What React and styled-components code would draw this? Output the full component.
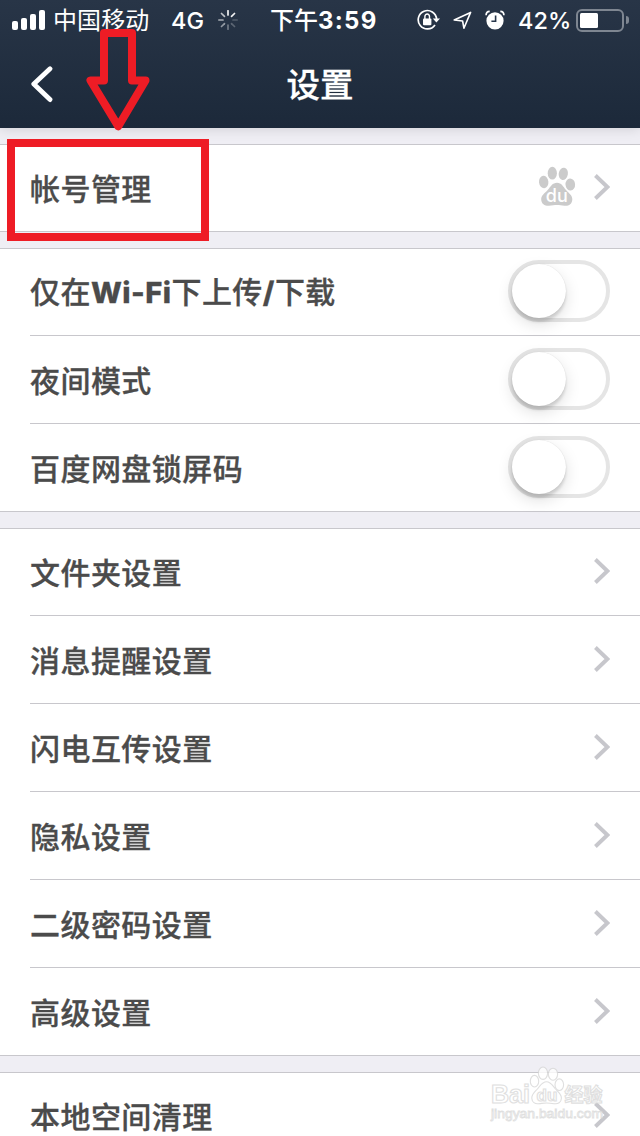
import styled, { createGlobalStyle } from "styled-components";

const groups = [
  [{ label: "帐号管理", type: "account" }],
  [
    { label: "仅在Wi-Fi下上传/下载", type: "switch" },
    { label: "夜间模式", type: "switch" },
    { label: "百度网盘锁屏码", type: "switch" },
  ],
  [
    { label: "文件夹设置" },
    { label: "消息提醒设置" },
    { label: "闪电互传设置" },
    { label: "隐私设置" },
    { label: "二级密码设置" },
    { label: "高级设置" },
  ],
  [{ label: "本地空间清理" }],
];

const spokes = [0.95, 0.95, 0.2, 0.25, 0.35, 0.5, 0.6, 0.7];

const GlobalStyle = createGlobalStyle`
  body {
    margin: 0;
    overflow: hidden;
  }
`;

const Page = styled.div`
  position: relative;
  width: 640px;
  height: 1136px;
  overflow: hidden;
  background: #efeef4;
  font-family: "Inter", "Noto Sans CJK SC", sans-serif;
  color: #4b4b4b;
  svg {
    display: block;
    flex: none;
  }
`;

const Header = styled.header`
  height: 128px;
  margin-bottom: 16px;
  background: linear-gradient(#283547, #1c293a);
  color: #fff;
  box-shadow: 0 1px 12px rgba(0, 0, 0, 0.13);
`;

const Status = styled.div`
  display: flex;
  align-items: center;
  height: 40px;
  padding-left: 12px;
  font-size: 24px;
  line-height: 38px;
  white-space: nowrap;
`;

const Signal = styled.div`
  display: flex;
  align-items: flex-end;
  gap: 3px;
  width: 41px;
  height: 20px;
`;

const SignalBar = styled.i`
  width: 6px;
  height: ${({ $height }) => $height}px;
  border-radius: 2px;
  background: #fff;
`;

const StatusText = styled.span`
  width: ${({ $width }) => $width}px;
  padding-top: 2px;
`;

const Carrier = styled(StatusText)`
  letter-spacing: 0.1px;
`;

const Digits = styled(StatusText)`
  font-size: 23.5px;
  font-weight: 500;
`;

const Spinner = styled.svg`
  margin-right: 32px;
`;

const Clock = styled(StatusText)`
  font-weight: 500;
  b {
    font-weight: 700;
    letter-spacing: 1.3px;
  }
`;

const StatusIcons = styled.div`
  display: flex;
  align-items: center;
  gap: 13px;
  width: 101px;
`;

const Battery = styled.div`
  box-sizing: border-box;
  width: 48px;
  height: 23px;
  padding: 2px;
  border: 2px solid #7e8691;
  border-radius: 6px;
`;

const BatteryLevel = styled.div`
  width: ${({ $level }) => $level}%;
  height: 15px;
  border-radius: 1.5px;
  background: #fff;
`;

const BatteryTip = styled.div`
  width: 3px;
  height: 8px;
  margin-left: 2px;
  border-radius: 0 4px 4px 0;
  background: #7e8691;
`;

const Nav = styled.nav`
  display: grid;
  grid-template-columns: 1fr auto 1fr;
  align-items: center;
  height: 88px;
`;

const Back = styled.div`
  padding-left: 29px;
`;

const Title = styled.h1`
  margin: 0;
  padding-top: 2px;
  font-size: 33.5px;
  font-weight: 500;
  line-height: 86px;
  -webkit-text-stroke: 0.3px #fff;
`;

const Group = styled.section`
  border-top: 1px solid #c8c7cc;
  border-bottom: 1px solid #c8c7cc;
  margin-bottom: 16px;
  background: #fff;
`;

const Row = styled.div`
  display: flex;
  align-items: center;
  box-sizing: border-box;
  height: 88px;
  margin-left: 30px;
  padding: 0 30px 1px 0;
  border-bottom: 1px solid #c8c7cc;
  &:first-child {
    height: 87px;
    padding-bottom: 2px;
  }
  /* the group closes with its own full width line */
  &:last-child {
    height: 87px;
    border-bottom: 0;
  }
  &:first-child:last-child {
    height: 86px;
  }
`;

const RowLabel = styled.span`
  flex: 1;
  padding-top: 3px;
  font-size: 30px;
  font-weight: 500;
  letter-spacing: 0.45px;
  line-height: 44px;
  white-space: nowrap;
  -webkit-text-stroke: 0.3px #4b4b4b;
`;

const Latin = styled.span`
  font-size: 29.2px;
  font-weight: 800;
`;

const PawIcon = styled.svg`
  margin-right: 17px;
`;

const PawText = styled.text`
  fill: #fff;
  font: 500 18px "Inter", sans-serif;
  text-anchor: middle;
`;

const Toggle = styled.div`
  box-sizing: border-box;
  width: 102px;
  height: 62px;
  border: 4px solid #e5e5e5;
  border-radius: 31px;
  &::before {
    content: "";
    display: block;
    width: 54px;
    height: 54px;
    border-radius: 50%;
    background: #fff;
    box-shadow: 0 6px 16px rgba(0, 0, 0, 0.13), 0 4px 3px rgba(0, 0, 0, 0.12),
      0 0 1px rgba(0, 0, 0, 0.15);
  }
`;

const WatermarkMark = styled.svg`
  position: absolute;
  left: 486px;
  top: 1064px;
  opacity: 0.8;
`;

const MarkText = styled.text`
  font: ${({ $font }) => $font} "Liberation Sans", "Noto Sans CJK SC", sans-serif;
`;

const Arrow = styled.svg`
  position: absolute;
  left: 85px;
  top: 26px;
`;

const Highlight = styled.div`
  position: absolute;
  left: 7px;
  top: 139px;
  box-sizing: border-box;
  width: 202px;
  height: 102px;
  border: 8px solid #ee1c25;
`;

// latin parts of a label are set in a heavier face than the chinese ones
function Label({ text }) {
  return (
    <RowLabel>
      {text.split(/([A-Za-z-]+|\/)/).map((part, i) =>
        i % 2 ? <Latin key={i}>{part}</Latin> : part
      )}
    </RowLabel>
  );
}

function Chevron() {
  return (
    <svg width="17" height="26" viewBox="0 0 17 26" fill="none">
      <path d="M2.4 1.5 L14.4 13 L2.4 24.5" stroke="#c7c7cc" strokeWidth="3.9" />
    </svg>
  );
}

function Paw() {
  return (
    <PawIcon width="38" height="42" viewBox="0 0 38 42">
      <g fill="#cbcbcb">
        <ellipse cx="5.7" cy="16" rx="4.7" ry="6.2" transform="rotate(-6 5.7 16)" />
        <ellipse cx="14.3" cy="7.2" rx="4.6" ry="6.4" />
        <ellipse cx="25.3" cy="7.8" rx="4.6" ry="6.2" transform="rotate(10 25.3 7.8)" />
        <ellipse cx="32.3" cy="18.5" rx="4.8" ry="6" transform="rotate(-4 32.3 18.5)" />
        <path d="M19 16.8 C23.5 16.8 25 20.5 28 24 C31 27.3 34.5 29.5 34.3 33.5 C34.1 38.2 30.5 40.3 26.5 39.8 C23.5 39.5 21.5 39 19 39 C16.5 39 14 39.6 11 39.8 C6.8 40 3.4 38 3.2 33.5 C3 29.5 6.8 27.2 9.7 24 C12.8 20.5 14.5 16.8 19 16.8 Z" />
      </g>
      <PawText x="18.8" y="36.2">
        du
      </PawText>
    </PawIcon>
  );
}

function StatusBar() {
  return (
    <Status>
      <Signal>
        {[9, 12, 16, 20].map((h) => (
          <SignalBar key={h} $height={h} />
        ))}
      </Signal>
      <Carrier $width={118}>中国移动</Carrier>
      <Digits $width={47}>4G</Digits>
      <Spinner width="20" height="20" viewBox="-10 -10 20 20">
        {spokes.map((o, i) => (
          <path
            key={i}
            d="M0 -5 V-9.2"
            stroke="#fff"
            strokeWidth="1.7"
            strokeLinecap="round"
            opacity={o}
            transform={`rotate(${i * 45})`}
          />
        ))}
      </Spinner>
      <Clock $width={147}>
        下午<b>3:59</b>
      </Clock>
      <StatusIcons>
        {/* rotation lock */}
        <svg width="23" height="22" viewBox="0 0 23 22" fill="none">
          <path d="M18 16 A9.2 9.2 0 1 1 19.6 10" stroke="#fff" strokeWidth="1.7" />
          <path d="M15.8 9.4 H23 L19.4 13.6 Z" fill="#fff" />
          <rect x="6" y="9.6" width="8.4" height="6.6" rx="1" fill="#fff" />
          <path d="M7.9 10 V7.6 A2.3 2.6 0 0 1 12.5 7.6 V10" stroke="#fff" strokeWidth="1.4" />
        </svg>
        {/* location */}
        <svg width="19" height="19" viewBox="0 0 19 19" fill="none">
          <path d="M17.6 1.4 L10.9 17.2 L9.6 10 L1.2 9 Z" stroke="#fff" strokeWidth="1.6" strokeLinejoin="round" />
        </svg>
        {/* alarm */}
        <svg width="20" height="20" viewBox="0 0 20 20" fill="none">
          <circle cx="10" cy="10.8" r="8.6" fill="#fff" />
          <path d="M10.6 5.6 V11.2 H6.4" stroke="#27364a" strokeWidth="1.6" />
          <path d="M1.1 5.2 C1.1 2.5 2.4 1.5 4.7 1.4 M18.9 5.2 C18.9 2.5 17.6 1.5 15.3 1.4" stroke="#fff" strokeWidth="1.7" />
        </svg>
      </StatusIcons>
      <Digits $width={58}>42%</Digits>
      <Battery>
        <BatteryLevel $level={45} />
      </Battery>
      <BatteryTip />
    </Status>
  );
}

function Watermark() {
  return (
    <WatermarkMark width="124" height="62" viewBox="0 0 124 62">
      <g fill="#fff" stroke="#d8d8d8" strokeWidth="1.1">
        <g transform="translate(10 -.8)">
          <ellipse cx="38.5" cy="18" rx="4.2" ry="5.8" />
          <ellipse cx="47" cy="10" rx="4.6" ry="6.2" />
          <ellipse cx="57" cy="11" rx="4.6" ry="6" />
          <ellipse cx="63.3" cy="21.5" rx="4.3" ry="5.8" />
          <path d="M50.5 18.5 C55 18.5 56.5 22.5 59.5 25.8 C62.5 29 65.6 31 65.4 35 C65.2 39.5 62 41 58 40.5 C55 40 53 39.8 50.5 39.8 C48 39.8 46 40.2 43 40.5 C38.8 41 36 39 35.8 35 C35.6 31 38.5 29 41.4 25.8 C44.4 22.5 46 18.5 50.5 18.5 Z" />
        </g>
        <MarkText $font="700 25px" x="5" y="38.5" textLength="39" lengthAdjust="spacingAndGlyphs">
          Bai
        </MarkText>
        <MarkText $font="700 17px" x="50.5" y="36.5">
          du
        </MarkText>
        <MarkText $font="700 19px" x="78.5" y="37.5">
          经验
        </MarkText>
        <MarkText $font="400 13px" x="5" y="53.5" strokeWidth="0.8" textLength="112" lengthAdjust="spacingAndGlyphs">
          jingyan.baidu.com
        </MarkText>
      </g>
    </WatermarkMark>
  );
}

function App() {
  return (
    <Page>
      <GlobalStyle />
      <Header>
        <StatusBar />
        <Nav>
          <Back>
            <svg width="24" height="38" viewBox="0 0 24 38" fill="none">
              <path d="M21 3.8 L4.8 19 L21 34.6" stroke="#fff" strokeWidth="4.8" strokeLinecap="round" strokeLinejoin="round" />
            </svg>
          </Back>
          <Title>设置</Title>
        </Nav>
      </Header>

      {groups.map((rows, i) => (
        <Group key={i}>
          {rows.map((row) => (
            <Row key={row.label}>
              <Label text={row.label} />
              {row.type === "account" && <Paw />}
              {row.type === "switch" ? <Toggle /> : <Chevron />}
            </Row>
          ))}
        </Group>
      ))}

      <Watermark />
      <Arrow width="66" height="106" viewBox="0 0 66 106" fill="none">
        <path
          d="M19 7 H47 V54.5 H60.5 L33.3 100.3 L5.5 54.5 H19 Z"
          stroke="#ee1c25"
          strokeWidth="8"
          strokeLinejoin="round"
        />
      </Arrow>
      <Highlight />
    </Page>
  );
}

export default App;
